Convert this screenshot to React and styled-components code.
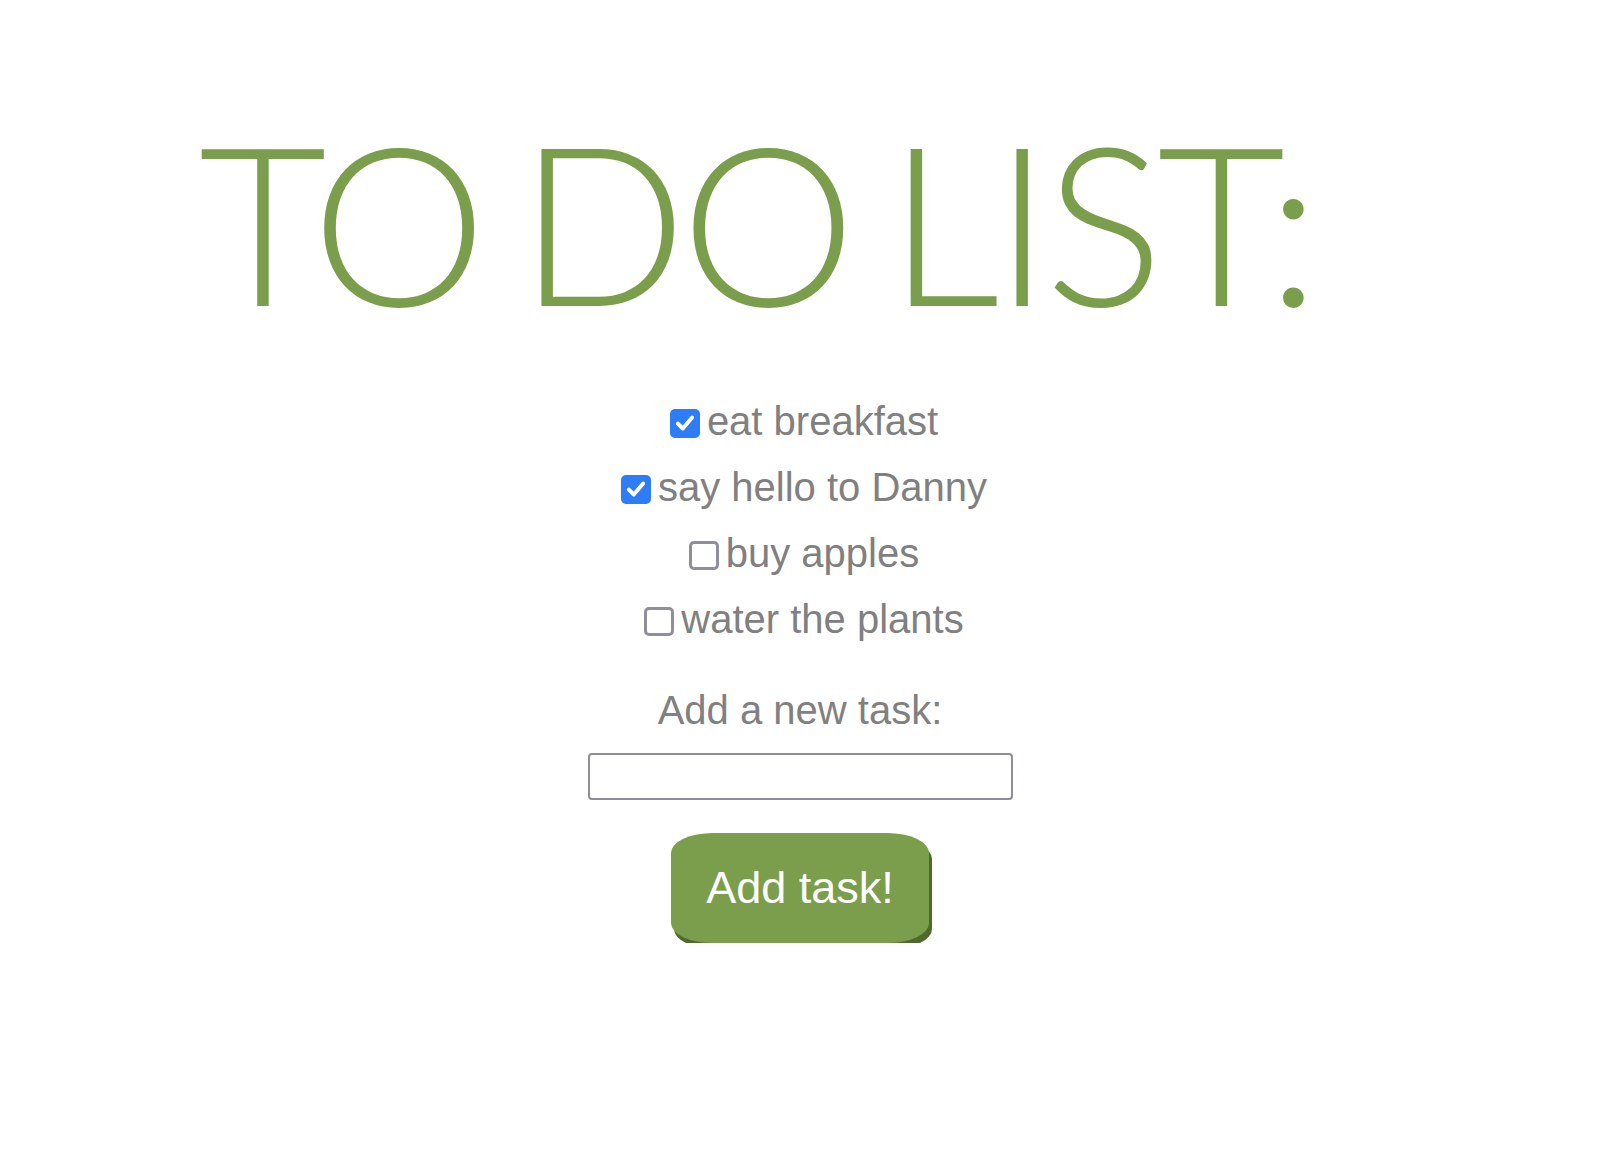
import React, { useState } from "react";
import styled, { createGlobalStyle } from "styled-components";

const GlobalStyle = createGlobalStyle`
  body {
    margin: 0;
    background: #ffffff;
    font-family: "Liberation Sans", Arial, sans-serif;
  }
`;

const Page = styled.main`
  width: 1600px;
  display: flex;
  flex-direction: column;
  align-items: center;
  padding-top: 109px;
`;

const Title = styled.h1`
  margin: 0;
  padding-right: 88px;
  font-family: Lato, "Open Sans", sans-serif;
  font-weight: 300;
  font-size: 222px;
  line-height: 1;
  letter-spacing: -6.5px;
  word-spacing: -16px;
  color: #7b9e4c;
  white-space: nowrap;
`;

const TaskList = styled.ul`
  list-style: none;
  margin: 57px 0 0;
  padding: 0;
  display: flex;
  flex-direction: column;
  align-items: center;
`;

const Task = styled.li`
  display: flex;
  align-items: center;
  gap: 7px;
  height: 66px;
  padding-left: 8px;
  font-size: 40px;
  color: gray;
`;

const Box = styled.span`
  box-sizing: border-box;
  width: 30px;
  height: 29px;
  border-radius: 5px;
  display: inline-flex;
  align-items: center;
  justify-content: center;
  margin-top: 4px;
  background: ${(p) => (p.checked ? "#2e7cf6" : "#ffffff")};
  border: ${(p) => (p.checked ? "none" : "3px solid #8f8f99")};
  cursor: pointer;
`;

const Label = styled.label`
  display: block;
  margin-top: 36px;
  font-size: 40px;
  color: gray;
`;

const TaskInput = styled.input`
  box-sizing: border-box;
  width: 425px;
  height: 47px;
  margin-top: 20px;
  border: 2px solid #8e8c9a;
  border-radius: 4px;
  font-size: 24px;
  padding: 0 8px;
  outline: none;
`;

const AddButton = styled.button`
  box-sizing: border-box;
  width: 258px;
  height: 110px;
  margin-top: 33px;
  border: none;
  border-radius: 42px / 20px;
  background: #7b9e4c;
  box-shadow: 3px 6px 0 #4f6a2d;
  color: #ffffff;
  font-family: "Liberation Sans", Arial, sans-serif;
  font-size: 45px;
  cursor: pointer;
`;

const Check = () => (
  <svg width="22" height="22" viewBox="0 0 20 20">
    <path
      d="M3.5 10.5 L8 15 L16.5 5"
      fill="none"
      stroke="#ffffff"
      strokeWidth="3.6"
      strokeLinecap="round"
      strokeLinejoin="round"
    />
  </svg>
);

const initialTasks = [
  { text: "eat breakfast", done: true },
  { text: "say hello to Danny", done: true },
  { text: "buy apples", done: false },
  { text: "water the plants", done: false },
];

export default function App() {
  const [tasks, setTasks] = useState(initialTasks);
  const [draft, setDraft] = useState("");

  const toggle = (i) =>
    setTasks(tasks.map((t, j) => (j === i ? { ...t, done: !t.done } : t)));

  const add = () => {
    if (!draft.trim()) return;
    setTasks([...tasks, { text: draft.trim(), done: false }]);
    setDraft("");
  };

  return (
    <>
      <GlobalStyle />
      <Page>
        <Title>TO DO LIST:</Title>
        <TaskList>
          {tasks.map((t, i) => (
            <Task key={i}>
              <Box checked={t.done} onClick={() => toggle(i)}>
                {t.done && <Check />}
              </Box>
              {t.text}
            </Task>
          ))}
        </TaskList>
        <Label htmlFor="new-task">Add a new task:</Label>
        <TaskInput
          id="new-task"
          value={draft}
          onChange={(e) => setDraft(e.target.value)}
        />
        <AddButton onClick={add}>Add task!</AddButton>
      </Page>
    </>
  );
}
